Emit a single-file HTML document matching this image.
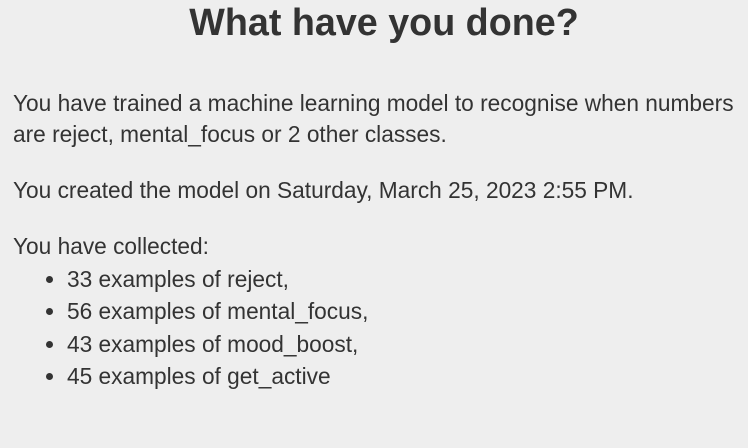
<!DOCTYPE html>
<html><head><meta charset="utf-8"><style>
html,body{margin:0;padding:0;background:#eeeeee;width:748px;height:448px;overflow:hidden}
body{font-family:"Liberation Sans",Arial,sans-serif;color:#333;font-size:22.7px}
h1{position:absolute;left:10px;width:748px;top:0;margin:0;text-align:center;font-size:37.7px;line-height:44px;font-weight:bold;color:#333}
.t{position:absolute;left:13px;line-height:31px;white-space:nowrap}
ul{position:absolute;left:13px;top:263px;margin:0;padding:0 0 0 54px;line-height:32.3px}
</style></head><body>
<h1>What have you done?</h1>
<div class="t" style="top:88px">You have trained a machine learning model to recognise when numbers<br>are reject, mental_focus or 2 other classes.</div>
<div class="t" style="top:175px">You created the model on Saturday, March 25, 2023 2:55 PM.</div>
<div class="t" style="top:231px">You have collected:</div>
<ul>
<li>33 examples of reject,</li>
<li>56 examples of mental_focus,</li>
<li>43 examples of mood_boost,</li>
<li>45 examples of get_active</li>
</ul>
</body></html>
